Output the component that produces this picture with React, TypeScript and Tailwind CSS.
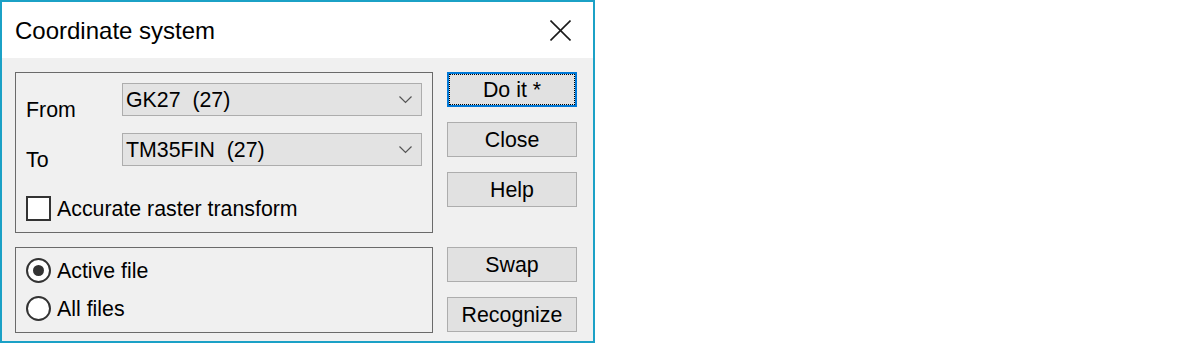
import { useState } from 'react';

const FONT = { fontFamily: '"Liberation Sans", Arial, sans-serif' };

function Chevron() {
  return (
    <svg width="13" height="8" viewBox="0 0 13 8" className="shrink-0">
      <polyline points="0.5,0.5 6.5,6.5 12.5,0.5" fill="none" stroke="#555" strokeWidth="1.2" />
    </svg>
  );
}

function Combo({ value }: { value: string }) {
  return (
    <div className="w-[300px] h-[33px] border border-[#adadad] bg-[#e3e3e3] flex items-center justify-between pl-[3px] pr-[9px]">
      <span className="whitespace-pre leading-none pt-[2px]">{value}</span>
      <Chevron />
    </div>
  );
}

function Button({ label, primary }: { label: string; primary?: boolean }) {
  return (
    <div
      className={
        primary
          ? 'relative w-[130px] h-[35px] border-2 border-[#0078d7] bg-[#e1e1e1] flex items-center justify-center'
          : 'w-[130px] h-[35px] border border-[#adadad] bg-[#e1e1e1] flex items-center justify-center'
      }
    >
      {primary && <div className="absolute inset-0 border border-dotted border-black" />}
      <span className="leading-none pt-[3px]">{label}</span>
    </div>
  );
}

function Radio({ label, checked, onClick }: { label: string; checked: boolean; onClick: () => void }) {
  return (
    <div className="flex items-center gap-[6px] h-[25px] cursor-default" onClick={onClick}>
      <div className="w-[25px] h-[25px] rounded-full border-2 border-[#333] bg-white flex items-center justify-center">
        {checked && <div className="w-[11px] h-[11px] rounded-full bg-[#333]" />}
      </div>
      <span className="leading-none pt-[3px]">{label}</span>
    </div>
  );
}

export default function App() {
  const [accurate, setAccurate] = useState(false);
  const [scope, setScope] = useState<'active' | 'all'>('active');

  return (
    <div className="w-[1200px] h-[344px] bg-white text-black text-[21.33px]" style={FONT}>
      <div className="w-[595px] h-[343px] border-2 border-[#1ba1c6] flex flex-col">
        {/* title bar */}
        <div className="h-[56px] bg-white flex items-center justify-between pl-[13px] pr-[22px]">
          <span className="text-[24px] leading-none pt-[1px]">Coordinate system</span>
          <svg width="21" height="21" viewBox="0 0 21 21">
            <line x1="0.5" y1="0.5" x2="20.5" y2="20.5" stroke="#1a1a1a" strokeWidth="1.6" />
            <line x1="20.5" y1="0.5" x2="0.5" y2="20.5" stroke="#1a1a1a" strokeWidth="1.6" />
          </svg>
        </div>

        {/* body */}
        <div className="flex-1 bg-[#f0f0f0] flex pl-[13px] pt-[14px] gap-[14px]">
          <div className="w-[418px] flex flex-col gap-[14px]">
            <div className="h-[161px] border border-[#6a6a6a] flex flex-col pl-[10px] pt-[10px]">
              <div className="flex h-[33px]">
                <span className="w-[96px] leading-none pt-[17px]">From</span>
                <Combo value="GK27  (27)" />
              </div>
              <div className="flex h-[33px] mt-[17px]">
                <span className="w-[96px] leading-none pt-[17px]">To</span>
                <Combo value="TM35FIN  (27)" />
              </div>
              <div className="flex items-center gap-[6px] mt-[30px] cursor-default" onClick={() => setAccurate(!accurate)}>
                <div className="w-[25px] h-[25px] border-2 border-[#333] bg-white flex items-center justify-center">
                  {accurate && (
                    <svg width="17" height="13" viewBox="0 0 17 13">
                      <polyline points="1,6 6,11 16,1" fill="none" stroke="#333" strokeWidth="2" />
                    </svg>
                  )}
                </div>
                <span className="leading-none pt-[3px]">Accurate raster transform</span>
              </div>
            </div>

            <div className="h-[86px] border border-[#6a6a6a] flex flex-col gap-[13px] pl-[10px] pt-[10px]">
              <Radio label="Active file" checked={scope === 'active'} onClick={() => setScope('active')} />
              <Radio label="All files" checked={scope === 'all'} onClick={() => setScope('all')} />
            </div>
          </div>

          <div className="w-[130px] flex flex-col">
            <div className="flex flex-col gap-[15px]">
              <Button label="Do it *" primary />
              <Button label="Close" />
              <Button label="Help" />
            </div>
            <div className="flex flex-col gap-[15px] mt-[40px]">
              <Button label="Swap" />
              <Button label="Recognize" />
            </div>
          </div>
        </div>
      </div>
    </div>
  );
}
